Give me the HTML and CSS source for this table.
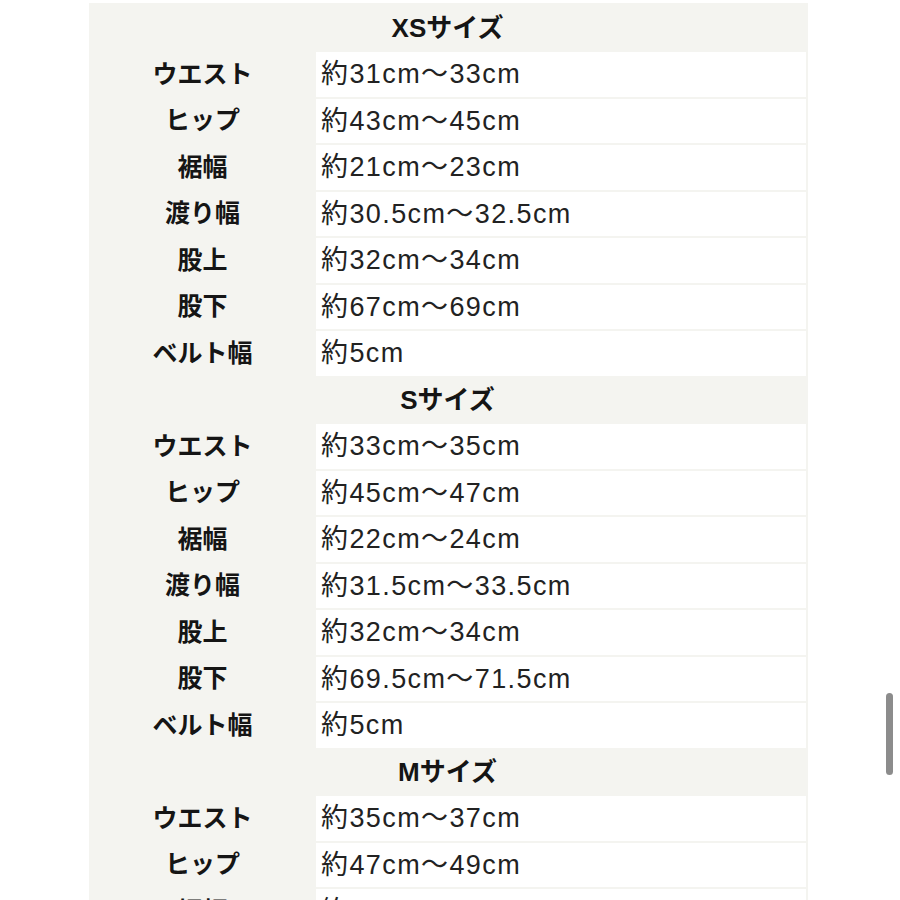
FILE: index.html
```html
<!DOCTYPE html>
<html lang="ja">
<head>
<meta charset="utf-8">
<link rel="stylesheet" href="styles.css">
</head>
<body>
<div class="panel">
  <div class="head">XSサイズ</div>
  <div class="label">ウエスト</div><div class="val">約31cm〜33cm</div>
  <div class="label">ヒップ</div><div class="val">約43cm〜45cm</div>
  <div class="label">裾幅</div><div class="val">約21cm〜23cm</div>
  <div class="label">渡り幅</div><div class="val">約30.5cm〜32.5cm</div>
  <div class="label">股上</div><div class="val">約32cm〜34cm</div>
  <div class="label">股下</div><div class="val">約67cm〜69cm</div>
  <div class="label">ベルト幅</div><div class="val">約5cm</div>

  <div class="head">Sサイズ</div>
  <div class="label">ウエスト</div><div class="val">約33cm〜35cm</div>
  <div class="label">ヒップ</div><div class="val">約45cm〜47cm</div>
  <div class="label">裾幅</div><div class="val">約22cm〜24cm</div>
  <div class="label">渡り幅</div><div class="val">約31.5cm〜33.5cm</div>
  <div class="label">股上</div><div class="val">約32cm〜34cm</div>
  <div class="label">股下</div><div class="val">約69.5cm〜71.5cm</div>
  <div class="label">ベルト幅</div><div class="val">約5cm</div>

  <div class="head">Mサイズ</div>
  <div class="label">ウエスト</div><div class="val">約35cm〜37cm</div>
  <div class="label">ヒップ</div><div class="val">約47cm〜49cm</div>
  <div class="label">裾幅</div><div class="val">約23cm〜25cm</div>
</div>
<div class="scrollbar"></div>
</body>
</html>
```
FILE: styles.css
```css
html, body {
  margin: 0;
  padding: 0;
  width: 900px;
  height: 900px;
  overflow: hidden;
  background: #ffffff;
}
body {
  position: relative;
  font-family: "Liberation Sans", "Noto Sans CJK JP", sans-serif;
  color: #1c1c1c;
}
.panel {
  margin: 3px 0 0 89px;
  width: 719px;
  padding-top: 2.5px;
  background: #f4f4f0;
  display: grid;
  grid-template-columns: 227px 490px;
  grid-auto-rows: 44.5px;
  row-gap: 2px;
}
.head {
  grid-column: 1 / 3;
  display: flex;
  align-items: center;
  justify-content: center;
  padding-bottom: 4px;
  font-weight: bold;
  font-size: 26px;
  font-family: "Liberation Sans", "Noto Sans CJK JP", sans-serif;
  color: #151515;
}
.label {
  display: flex;
  align-items: center;
  justify-content: center;
  padding-bottom: 5px;
  font-family: "Noto Sans CJK JP", sans-serif;
  font-weight: bold;
  font-size: 25px;
  color: #151515;
}
.val {
  background: #ffffff;
  display: flex;
  align-items: center;
  padding-left: 5px;
  padding-bottom: 5px;
  font-size: 27px;
  letter-spacing: 1.4px;
  color: #222222;
}
.scrollbar {
  position: absolute;
  left: 886px;
  top: 693px;
  width: 7px;
  height: 82px;
  border-radius: 4px;
  background: #8c8c8c;
}
```
